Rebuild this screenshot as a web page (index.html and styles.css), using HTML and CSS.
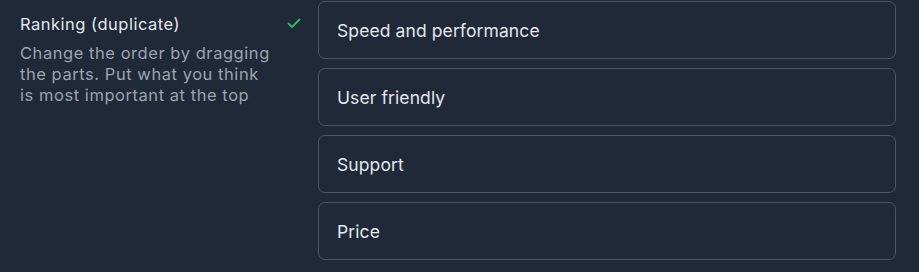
FILE: index.html
```html
<!DOCTYPE html>
<html>
<head>
<meta charset="utf-8">
<link rel="stylesheet" href="styles.css">
</head>
<body>
<div class="question">
  <div class="info">
    <div class="head">
      <div class="title">Ranking (duplicate)</div>
      <svg class="check" width="14" height="14" viewBox="0 0 14 14"><path d="M1.5 7.5 L5 11 L12.5 3.5" fill="none" stroke="#22c55e" stroke-width="1.8" stroke-linecap="round" stroke-linejoin="round"/></svg>
    </div>
    <p class="desc">Change the order by dragging the parts. Put what you think is most important at the top</p>
  </div>
  <ul class="list">
    <li class="item">Speed and performance</li>
    <li class="item">User friendly</li>
    <li class="item">Support</li>
    <li class="item">Price</li>
  </ul>
</div>
</body>
</html>
```
FILE: styles.css
```css
html, body {
  margin: 0;
  padding: 0;
  background: #1f2937;
}
body {
  font-family: Inter, "Noto Sans", sans-serif;
  color: #e5e7eb;
}
.question {
  display: flex;
  padding: 1px 23px 0 20px;
  gap: 17px;
}
.info {
  width: 281px;
  flex: none;
  padding-top: 13px;
}
.head {
  display: flex;
  justify-content: space-between;
  align-items: center;
}
.title {
  font-size: 16.5px;
  letter-spacing: 0.5px;
  line-height: 20px;
  color: #e5e7eb;
}
.check {
  margin-top: -2px;
}
.desc {
  margin: 9px 0 0;
  width: 256px;
  font-size: 16.5px;
  letter-spacing: 0.55px;
  line-height: 21px;
  color: #9ca3af;
}
.list {
  list-style: none;
  margin: 0;
  padding: 0;
  flex: 1;
  display: flex;
  flex-direction: column;
  gap: 9px;
}
.item {
  box-sizing: border-box;
  height: 58px;
  border: 1px solid #4b5563;
  border-radius: 7px;
  display: flex;
  align-items: center;
  padding: 1px 0 0 18px;
  font-size: 17.5px;
  letter-spacing: 0.1px;
  color: #e5e7eb;
}
```
